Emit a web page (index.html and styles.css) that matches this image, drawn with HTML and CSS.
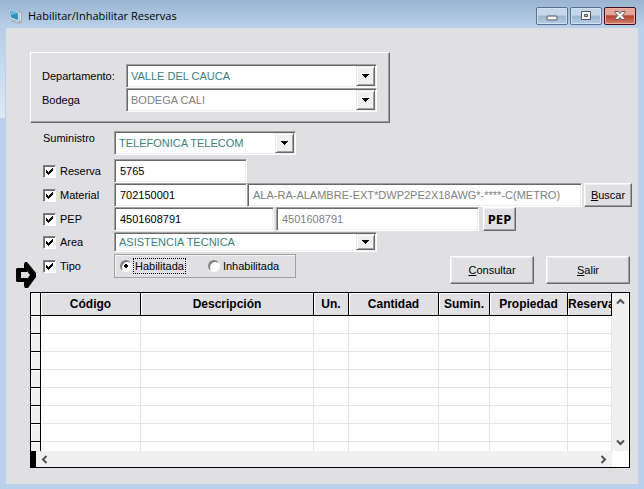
FILE: index.html
```html
<!DOCTYPE html>
<html lang="es">
<head>
<meta charset="utf-8">
<title>Habilitar/Inhabilitar Reservas</title>
<link rel="stylesheet" href="styles.css">
</head>
<body>
<div class="window">
  <header class="titlebar">
    <svg class="app-icon" width="16" height="16" viewBox="0 0 16 16" aria-hidden="true">
      <path d="M4 13l6 2.600 4-1.600-3-1.500z" fill="#c9cfd4" stroke="#8b8f94" stroke-width=".5"/>
      <path d="M11 3.500l2.500 1v8L11 14z" fill="#e8e8e6" stroke="#8a8a88" stroke-width=".6"/>
      <path d="M.6.6L11 3.500V14L2 10.500z" fill="#f3f6f8" stroke="#8fa3b3" stroke-width=".7"/>
      <path d="M1.900 2l8 2.400v7.800L3 9.600z" fill="#2a8fbd"/>
      <path d="M1.900 2l8 2.400v1.200L3.200 7z" fill="#62bad9"/>
    </svg>
    <h1>Habilitar/Inhabilitar Reservas</h1>
    <div class="window-buttons">
      <button class="wb" type="button" aria-label="Minimizar"><svg width="12" height="10" viewBox="0 0 12 10"><rect x="1" y="5" width="10" height="4" rx="1" fill="#f5f5f0" stroke="#535666"/></svg></button>
      <button class="wb" type="button" aria-label="Maximizar"><svg width="12" height="10" viewBox="0 0 12 10"><path d="M1.500.5h9v8h-9zM4.500 3.500v2h3v-2z" fill="#f5f5f0" fill-rule="evenodd" stroke="#535666"/></svg></button>
      <button class="wb wb-close" type="button" aria-label="Cerrar"><svg width="12" height="10" viewBox="0 0 12 10"><path d="M1 .5h3.200L6 2.500l1.800-2H11v1L8.200 4.500 11 7.500v1H7.800L6 6.500l-1.800 2H1v-1l2.800-3L1 1.500z" fill="#f5f5f5" stroke="#535666"/></svg></button>
    </div>
  </header>

  <main class="client">
    <section class="group">
      <div class="row">
        <label class="label" for="departamento">Departamento:</label>
        <span class="combo"><select id="departamento"><option>VALLE DEL CAUCA</option></select></span>
      </div>
      <div class="row">
        <label class="label" for="bodega">Bodega</label>
        <span class="combo muted"><select id="bodega"><option>BODEGA CALI</option></select></span>
      </div>
    </section>

    <form class="form">
      <div class="row row-first">
        <label class="label label-top" for="suministro">Suministro</label>
        <span class="combo combo-short"><select id="suministro"><option>TELEFONICA TELECOM</option></select></span>
      </div>
      <div class="row">
        <label class="label"><input type="checkbox" checked>Reserva</label>
        <input class="field field-code" type="text" aria-label="Reserva" value="5765">
      </div>
      <div class="row">
        <label class="label"><input type="checkbox" checked>Material</label>
        <input class="field field-code" type="text" aria-label="Material" value="702150001">
        <input class="field field-grow muted" type="text" aria-label="Descripción del material" readonly value="ALA-RA-ALAMBRE-EXT*DWP2PE2X18AWG*-****-C(METRO)">
        <button class="btn btn-search" type="button"><u>B</u>uscar</button>
      </div>
      <div class="row">
        <label class="label"><input type="checkbox" checked>PEP</label>
        <input class="field field-pep" type="text" aria-label="PEP" value="4501608791">
        <input class="field field-name muted" type="text" aria-label="Nombre PEP" readonly value="4501608791">
        <button class="btn btn-pep" type="button">PEP</button>
      </div>
      <div class="row row-area">
        <label class="label"><input type="checkbox" checked>Area</label>
        <span class="combo combo-area"><select aria-label="Area"><option>ASISTENCIA TECNICA</option></select></span>
      </div>
      <div class="row row-tipo">
        <svg class="pointer" width="20" height="26" viewBox="0 0 20 26" aria-hidden="true"><path d="M9 0h2l9 11v4l-8 11H9l-1-2v-4H1l-1-1V7l1-1h7V2z" fill="#000"/><path d="M5 10h6V9l3 4-3 4v-1H5z" fill="#e0dfe4"/></svg>
        <label class="label"><input type="checkbox" checked>Tipo</label>
        <div class="radios" role="radiogroup" aria-label="Tipo">
          <label><input type="radio" name="tipo" checked><span class="focused">Habilitada</span></label>
          <label><input type="radio" name="tipo"><span>Inhabilitada</span></label>
        </div>
        <div class="actions">
          <button class="btn" type="button"><u>C</u>onsultar</button>
          <button class="btn" type="button"><u>S</u>alir</button>
        </div>
      </div>
    </form>

    <section class="grid">
      <div class="grid-view">
        <table>
          <colgroup><col class="c-mark"><col class="c-code"><col><col class="c-unit"><col class="c-qty"><col class="c-sum"><col class="c-prop"><col class="c-res"></colgroup>
          <thead><tr><td></td><th>Código</th><th>Descripción</th><th>Un.</th><th>Cantidad</th><th>Sumin.</th><th>Propiedad</th><th class="clipped">Reserva</th></tr></thead>
          <tbody>
            <tr><td></td><td></td><td></td><td></td><td></td><td></td><td></td><td></td></tr>
            <tr><td></td><td></td><td></td><td></td><td></td><td></td><td></td><td></td></tr>
            <tr><td></td><td></td><td></td><td></td><td></td><td></td><td></td><td></td></tr>
            <tr><td></td><td></td><td></td><td></td><td></td><td></td><td></td><td></td></tr>
            <tr><td></td><td></td><td></td><td></td><td></td><td></td><td></td><td></td></tr>
            <tr><td></td><td></td><td></td><td></td><td></td><td></td><td></td><td></td></tr>
            <tr><td></td><td></td><td></td><td></td><td></td><td></td><td></td><td></td></tr>
            <tr><td></td><td></td><td></td><td></td><td></td><td></td><td></td><td></td></tr>
          </tbody>
        </table>
      </div>
      <div class="scroll scroll-v">
        <svg width="9" height="9" viewBox="0 0 9 9"><path d="M1 6.500L4.500 3 8 6.500"/></svg>
        <svg width="9" height="9" viewBox="0 0 9 9"><path d="M1 2.500L4.500 6 8 2.500"/></svg>
      </div>
      <div class="scroll scroll-h">
        <svg width="9" height="9" viewBox="0 0 9 9"><path d="M6.500 1L3 4.500 6.500 8"/></svg>
        <svg width="9" height="9" viewBox="0 0 9 9"><path d="M2.500 1L6 4.500 2.500 8"/></svg>
      </div>
    </section>
  </main>
</div>
</body>
</html>
```

FILE: styles.css
```css
* { box-sizing: border-box; }

body {
  margin: 0;
  background: #b9d1ea;
  color: #000;
  font: 11px/14px "Liberation Sans", Arial, sans-serif;
}

input, select, button { font: inherit; color: inherit; margin: 0; }

.window {
  min-height: 100vh;
  padding: 0 6px 5px;
  display: flex;
  flex-direction: column;
  background:
    linear-gradient(#b5cde7, #dde9f5) 0 28px / 5px 90px no-repeat,
    linear-gradient(#9ab4d1, #b9d1ea) 0 0 / 100% 28px no-repeat,
    #b9d1ea;
}

/* Title bar */
.titlebar {
  height: 28px;
  display: flex;
  align-items: center;
  gap: 4px;
  padding: 4px 2px 0;
}

.titlebar h1 {
  margin: 0;
  flex: 1;
  font: 11px/16px "Open Sans", "Noto Sans", sans-serif;
}

.window-buttons { display: flex; gap: 2px; }

.wb {
  width: 32px;
  height: 18px;
  padding: 0;
  display: grid;
  place-items: center;
  border: 1px solid #5a708c;
  border-radius: 2px;
  background: linear-gradient(#c3d6ea 0 45%, #9bb5d0 50%, #b6cde6);
  box-shadow: inset 0 0 0 1px #d3e2f1;
}

.wb-close {
  border-color: #430b1c;
  background: linear-gradient(#e5a597 0 40%, #b9412c 50%, #d1806c);
  box-shadow: inset 0 0 0 1px #e8b3a8;
}

/* Client area */
.client {
  flex: 1;
  padding: 24px 6px 16px 24px;
  background: #e0dfe4;
}

.group {
  width: 360px;
  padding: 11px 12px 10px 11px;
  border: 1px solid;
  border-color: #fff #696969 #696969 #fff;
  box-shadow: inset -1px -1px #a0a0a0;
}

.group .label { width: 84px; }

.row { display: flex; align-items: center; height: 24px; position: relative; }

.label { width: 71px; display: flex; align-items: center; gap: 4px; flex: none; }

.form { margin: 8px 0 0 13px; }
.row-first { margin-bottom: 4px; }
.label-top { align-self: flex-start; }
.row-area { height: 22px; }
.row-tipo { margin-top: 1px; }

/* Sunken fields */
.field, .combo {
  height: 24px;
  border: 1px solid;
  border-color: #a0a0a0 #fff #fff #a0a0a0;
  box-shadow: inset 1px 1px #696969, inset -1px -1px #f0f0f0;
  background: #fff;
}

.field { min-width: 0; padding: 0 5px; outline: 0; }
.field-code { width: 133px; }
.field-pep { width: 160px; }
.field-name { width: 203px; margin-left: 2px; }
.field-grow { flex: 1; margin-right: 2px; }

.combo { position: relative; flex: 1; color: #3b807e; }
.combo-short { flex: none; width: 182px; }
.combo-area { flex: none; width: 263px; height: 20px; }

.combo select {
  appearance: none;
  display: block;
  width: 100%;
  height: 100%;
  padding: 0 20px 0 4px;
  border: 0;
  background: transparent;
  outline: 0;
}

.combo::after {
  content: "";
  position: absolute;
  inset: 1px 1px 1px auto;
  width: 17px;
  border: 1px solid;
  border-color: #e8e8e8 #696969 #696969 #e8e8e8;
  box-shadow: inset 1px 1px #fff, inset -1px -1px #a0a0a0;
  background: #f0f0f0 url("data:image/svg+xml,%3Csvg xmlns='http://www.w3.org/2000/svg' width='7' height='4' shape-rendering='crispEdges'%3E%3Cpath d='M0 0h7v1H6v1H5v1H4v1H3V3H2V2H1V1H0z'/%3E%3C/svg%3E") center no-repeat;
  pointer-events: none;
}

.combo.muted, .muted { color: #808080; }

/* Tick boxes and radios */
input[type="checkbox"], input[type="radio"] {
  appearance: none;
  flex: none;
  width: 13px;
  height: 13px;
  border: 1px solid;
  border-color: #808080 #fff #fff #808080;
  background: #fff center no-repeat;
  box-shadow: inset 1px 1px #696969;
}

input[type="checkbox"]:checked {
  background-image: url("data:image/svg+xml,%3Csvg xmlns='http://www.w3.org/2000/svg' width='7' height='7' shape-rendering='crispEdges'%3E%3Cpath d='M0 2h1v1h1v1h1V3h1V2h1V1h1V0h1v3H6v1H5v1H4v1H3v1H2V6H1V5H0z'/%3E%3C/svg%3E");
}

input[type="radio"] {
  width: 12px;
  height: 12px;
  border-radius: 50%;
}

input[type="radio"]:checked { background-image: radial-gradient(circle, #000 2px, transparent 2px); }

.radios {
  width: 182px;
  height: 24px;
  display: flex;
  align-items: center;
  gap: 22px;
  padding: 0 5px;
  border: 1px solid #a0a0a0;
  box-shadow: inset 1px 1px #f4f4f4;
}

.radios label { display: flex; align-items: center; gap: 1px; }
.radios span { padding: 0 1px; border: 1px solid transparent; }
.radios .focused { border: 1px dotted #000; }

/* Buttons */
.btn {
  height: 28px;
  padding: 0;
  border: 1px solid;
  border-color: #fff #696969 #696969 #fff;
  box-shadow: inset -1px -1px #a0a0a0, inset 1px 1px #f0f0f0;
  background: #e0dfe4;
}

.btn-search { width: 48px; height: 24px; }

.btn-pep {
  width: 33px;
  height: 24px;
  margin-left: 4px;
  font: bold 13px/16px "Noto Sans", sans-serif;
}

.actions {
  display: flex;
  gap: 12px;
  margin-left: auto;
  padding: 2px 2px 0 0;
  align-self: flex-start;
}

.actions .btn { width: 84px; }

/* Arrow that marks the active row */
.pointer { position: absolute; left: -27px; top: 8px; }

/* Data grid */
.grid {
  display: grid;
  grid-template-columns: 1fr 17px;
  grid-template-rows: 158px 16px;
  margin: 14px 2px 0 0;
  border: 1px solid #000;
  background: #fff;
}

.grid-view { overflow: hidden; }

table {
  width: 100%;
  table-layout: fixed;
  border-collapse: separate;
  border-spacing: 0;
}

.c-mark { width: 10px; }
.c-code { width: 100px; }
.c-unit { width: 35px; }
.c-qty { width: 90px; }
.c-sum { width: 51px; }
.c-prop { width: 78px; }
.c-res { width: 44px; }

th, td {
  height: 18px;
  padding: 0;
  border-right: 1px solid #e4e4e4;
  border-bottom: 1px solid #e4e4e4;
}

thead th, thead td {
  height: 23px;
  border-color: #000;
  background: #e0dfe4;
  box-shadow: inset 1px 1px #fff;
  font: bold 12px/14px "Liberation Sans", sans-serif;
  overflow: hidden;
  white-space: nowrap;
}

.clipped { text-align: left; }

td:first-child {
  border-color: #000;
  background: #f0f0f0;
  box-shadow: inset 1px 1px #fff;
}

.scroll { display: flex; justify-content: space-between; align-items: center; background: #f0f0f0; }
.scroll path { fill: none; stroke: #505050; stroke-width: 2; }
.scroll-v { flex-direction: column; padding: 4px 0; border-right: 1px solid #fff; }
.scroll-h { border-left: 5px solid #000; padding: 0 4px; }
```
